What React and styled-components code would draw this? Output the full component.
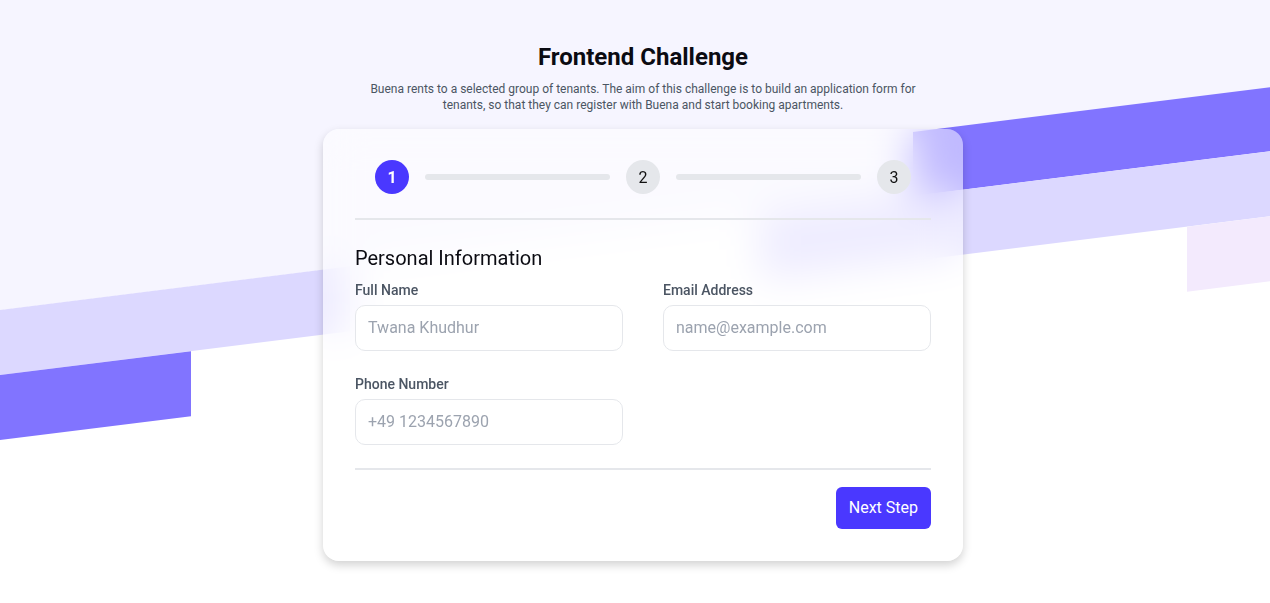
import React from "react";
import styled, { createGlobalStyle } from "styled-components";

const Global = createGlobalStyle`
  html, body { margin: 0; padding: 0; background: #ffffff; }
  body { font-family: Roboto, "Noto Sans", Arial, sans-serif; color: #111827; }
  * { box-sizing: border-box; }
`;

const Page = styled.main`
  position: relative;
  min-height: 100vh;
  overflow: hidden;
  padding: 41px 0 40px 16px;
  display: flex;
  flex-direction: column;
  align-items: center;
`;

const Backdrop = styled.div`
  position: absolute;
  top: 0;
  left: 0;
  right: 0;
  height: 440px;
  transform: skewY(-7.125deg);
  transform-origin: 0 0;
  display: grid;
  grid-template-rows: 246px 64px 65px 65px;
  grid-template-columns: 191px 159px 410px 153px 274px 1fr;
  background: linear-gradient(to bottom, #f6f5ff 0, #f6f5ff 310px, transparent 310px);
  z-index: 0;
`;

const tones = {
  dark: "#8174ff",
  light: "#dcd8ff",
  pink: "#f3eafd",
};

const Stripe = styled.div`
  grid-row: ${(p) => p.$row};
  grid-column: ${(p) => p.$col};
  background: ${(p) => tones[p.$tone]};
`;

const Header = styled.header`
  position: relative;
  z-index: 1;
  text-align: center;
  max-width: 560px;
`;

const Title = styled.h1`
  margin: 0;
  font-size: 24px;
  line-height: 32px;
  font-weight: 700;
  color: #0b0b12;
`;

const Lead = styled.p`
  margin: 8px 0 0;
  font-size: 12px;
  line-height: 16px;
  color: #4b5563;
`;

const Card = styled.section`
  position: relative;
  z-index: 1;
  margin-top: 16px;
  width: 640px;
  padding: 31px 32px 32px;
  border-radius: 16px;
  background: rgba(255, 255, 255, 0.5);
  backdrop-filter: blur(20px);
  -webkit-backdrop-filter: blur(20px);
  box-shadow: 0 4px 10px rgba(0, 0, 0, 0.18);
`;

const Stepper = styled.div`
  display: flex;
  align-items: center;
  padding: 0 20px;
  gap: 16px;
`;

const StepDot = styled.div`
  width: 34px;
  height: 34px;
  flex: none;
  border-radius: 50%;
  display: flex;
  align-items: center;
  justify-content: center;
  font-size: 16px;
  font-weight: ${(p) => (p.$active ? 700 : 400)};
  background: ${(p) => (p.$active ? "#4a38ff" : "#e5e7eb")};
  color: ${(p) => (p.$active ? "#ffffff" : "#111111")};
`;

const StepBar = styled.div`
  flex: 1;
  height: 6px;
  border-radius: 3px;
  background: #e5e7eb;
`;

const Rule = styled.hr`
  margin: ${(p) => p.$m};
  border: 0;
  height: 2px;
  background: #e5e7eb;
`;

const SectionTitle = styled.h2`
  margin: 0 0 7px;
  font-size: 20px;
  line-height: 30px;
  font-weight: 400;
  color: #0b0b12;
`;

const Grid = styled.div`
  display: grid;
  grid-template-columns: 1fr 1fr;
  column-gap: 40px;
  row-gap: 23px;
`;

const Field = styled.label`
  display: flex;
  flex-direction: column;
  gap: 5px;
`;

const Label = styled.span`
  font-size: 14px;
  line-height: 20px;
  font-weight: 500;
  color: #4b5563;
`;

const Input = styled.input`
  height: 46px;
  width: 100%;
  padding: 0 12px 2px;
  border: 1px solid #e5e7eb;
  border-radius: 10px;
  background: #ffffff;
  font-family: inherit;
  font-size: 16px;
  color: #111827;
  outline: none;
  &::placeholder { color: #9ca3af; }
`;

const Footer = styled.div`
  display: flex;
  justify-content: flex-end;
`;

const Button = styled.button`
  height: 42px;
  padding: 0 13px 2px;
  border: 0;
  border-radius: 6px;
  background: #4a38ff;
  color: #ffffff;
  font-family: inherit;
  font-size: 16px;
  cursor: pointer;
`;

export default function App() {
  return (
    <>
      <Global />
      <Page>
        <Backdrop aria-hidden="true">
          <Stripe $row={2} $col="5 / 7" $tone="dark" />
          <Stripe $row={3} $col="1 / 3" $tone="light" />
          <Stripe $row={3} $col="4 / 7" $tone="light" />
          <Stripe $row={4} $col="1 / 2" $tone="dark" />
          <Stripe $row={4} $col="6 / 7" $tone="pink" />
        </Backdrop>
        <Header>
          <Title>Frontend Challenge</Title>
          <Lead>
            Buena rents to a selected group of tenants. The aim of this challenge is to build an
            application form for tenants, so that they can register with Buena and start booking
            apartments.
          </Lead>
        </Header>
        <Card>
          <Stepper>
            <StepDot $active>1</StepDot>
            <StepBar />
            <StepDot>2</StepDot>
            <StepBar />
            <StepDot>3</StepDot>
          </Stepper>
          <Rule $m="24px 0 23px" />
          <SectionTitle>Personal Information</SectionTitle>
          <Grid>
            <Field>
              <Label>Full Name</Label>
              <Input placeholder="Twana Khudhur" />
            </Field>
            <Field>
              <Label>Email Address</Label>
              <Input type="email" placeholder="name@example.com" />
            </Field>
            <Field>
              <Label>Phone Number</Label>
              <Input type="tel" placeholder="+49 1234567890" />
            </Field>
          </Grid>
          <Rule $m="23px 0 17px" />
          <Footer>
            <Button type="button">Next Step</Button>
          </Footer>
        </Card>
      </Page>
    </>
  );
}
